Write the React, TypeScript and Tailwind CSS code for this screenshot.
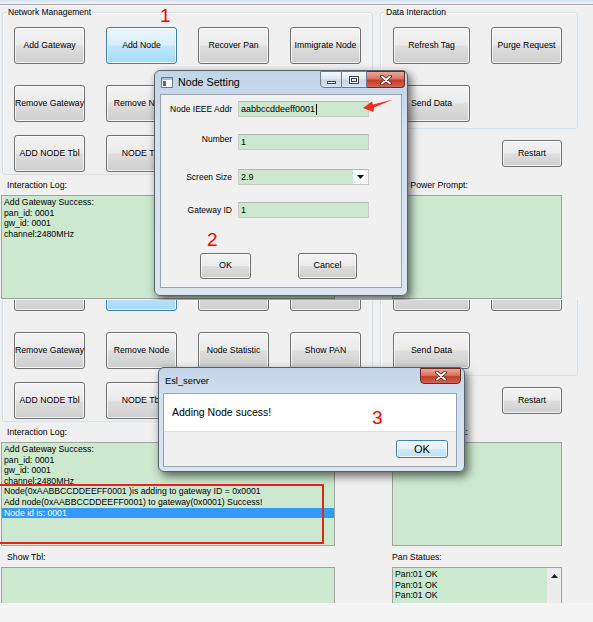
import React from "react";

const FONT = "font-['Liberation_Sans','Arial',sans-serif]";

const BTN_NORMAL =
  "border-[#707070] bg-[linear-gradient(180deg,#f3f3f3_0%,#ebebeb_48%,#dddddd_52%,#cfcfcf_100%)]";
const BTN_ACTIVE =
  "border-[#3c7fb1] bg-[linear-gradient(180deg,#eaf6fd_0%,#d9f0fc_48%,#bee6fd_52%,#a7d9f5_100%)]";
const BTN_DEFAULT =
  "border-[#3c7fb1] bg-[linear-gradient(180deg,#eef7fd_0%,#e2f1fb_48%,#cfe8f7_52%,#c0e0f3_100%)]";

function Btn({
  children,
  size = "h-[37px] w-[71px]",
  kind = "normal",
  text = "text-[8.7px]",
  className = "",
}: {
  children?: React.ReactNode;
  size?: string;
  kind?: "normal" | "active" | "default";
  text?: string;
  className?: string;
}) {
  const skin = kind === "active" ? BTN_ACTIVE : kind === "default" ? BTN_DEFAULT : BTN_NORMAL;
  return (
    <div
      className={`flex flex-none items-center justify-center whitespace-nowrap rounded-[3px] border text-black shadow-[inset_0_0_0_1px_rgba(255,255,255,0.75)] ${skin} ${size} ${text} ${className}`}
    >
      {children}
    </div>
  );
}

function Group({
  title,
  className,
  children,
}: {
  title: string;
  className: string;
  children?: React.ReactNode;
}) {
  return (
    <div className={`rounded-[3px] border border-[#d5dfe5] shadow-[inset_1px_1px_0_#ffffff] ${className}`}>
      <div className="-mt-[7px] ml-[4px] w-fit bg-[#f0f0f0] px-[1px] text-[8.5px] leading-[12px]">{title}</div>
      {children}
    </div>
  );
}

function Label({ className, children }: { className: string; children: React.ReactNode }) {
  return <div className={`text-[8.7px] leading-[12px] ${className}`}>{children}</div>;
}

function GreenBox({ className, children }: { className: string; children?: React.ReactNode }) {
  return <div className={`border border-[#a2a2a2] bg-[#cce8cf] ${className}`}>{children}</div>;
}

function LogLine({ children, selected }: { children: React.ReactNode; selected?: boolean }) {
  return (
    <div
      className={`whitespace-nowrap pl-[2px] text-[8.7px] leading-[10.6px] ${
        selected ? "bg-[#3399ff] text-white" : "text-black"
      }`}
    >
      {children}
    </div>
  );
}

function AppWindow({ log }: { log: React.ReactNode }) {
  return (
    <div className="w-[593px] bg-[#f0f0f0] text-black">
      <div className="h-[4px] bg-[linear-gradient(180deg,#d4e2f1,#eef3f9)]" />
      <div className="h-px bg-[#a7a7a7]" />
      <div className="flex">
        <div className="w-[378px] flex-none">
          <Group title="Network Management" className="ml-[2px] mt-[7px] h-[163px] w-[371px]">
            <div className="mt-[9px] pl-[11px]">
              <div className="flex gap-x-[21px]">
                <Btn>Add Gateway</Btn>
                <Btn kind="active">Add Node</Btn>
                <Btn>Recover Pan</Btn>
                <Btn>Immigrate Node</Btn>
              </div>
              <div className="mt-[21px] flex gap-x-[21px]">
                <Btn>Remove Gateway</Btn>
                <Btn>Remove Node</Btn>
                <Btn>Node Statistic</Btn>
                <Btn>Show PAN</Btn>
              </div>
              <div className="mt-[13px] flex gap-x-[21px]">
                <Btn>ADD NODE Tbl</Btn>
                <Btn>NODE Tbl</Btn>
              </div>
            </div>
          </Group>
          <Label className="ml-[7px] mt-[4px]">Interaction Log:</Label>
          <GreenBox className="ml-[1px] mt-[4px] h-[104px] w-[334px] pt-[1px]">{log}</GreenBox>
          <Label className="ml-[7px] mt-[5px]">Show Tbl:</Label>
          <GreenBox className="ml-[1px] mt-[4px] h-[60px] w-[334px]" />
        </div>
        <div className="flex-1">
          <Group title="Data Interaction" className="ml-[2px] mt-[7px] h-[117px] w-[198px]">
            <div className="mt-[9px] pl-[12px]">
              <div className="flex gap-x-[21px]">
                <Btn size="h-[37px] w-[77px]">Refresh Tag</Btn>
                <Btn>Purge Request</Btn>
              </div>
              <div className="mt-[21px] flex">
                <Btn size="h-[37px] w-[77px]">Send Data</Btn>
              </div>
            </div>
          </Group>
          <Btn size="h-[27px] w-[60px]" className="ml-[124px] mt-[11px]">
            Restart
          </Btn>
          <Label className="ml-[14px] mt-[12px]">Low Power Prompt:</Label>
          <GreenBox className="ml-[14px] mt-[4px] h-[104px] w-[170px]" />
          <Label className="ml-[14px] mt-[5px]">Pan Statues:</Label>
          <GreenBox className="ml-[14px] mt-[4px] flex h-[60px] w-[170px]">
            <div className="flex-1 pt-[1px]">
              <LogLine>Pan:01 OK</LogLine>
              <LogLine>Pan:01 OK</LogLine>
              <LogLine>Pan:01 OK</LogLine>
              <LogLine>Pan:01 OK</LogLine>
            </div>
            <div className="w-[15px] flex-none border-l border-[#dcdcdc] bg-[#ececec]">
              <div className="flex h-[16px] items-center justify-center">
                <svg width="7" height="4" viewBox="0 0 7 4">
                  <polygon points="0,4 3.5,0 7,4" fill="#222" />
                </svg>
              </div>
            </div>
          </GreenBox>
        </div>
      </div>
    </div>
  );
}

function CloseGlyph() {
  return (
    <svg width="12" height="10" viewBox="0 0 12 10">
      <path d="M2 1.5 L10 8.5 M10 1.5 L2 8.5" stroke="#4a1d18" strokeWidth="3.6" strokeLinecap="round" />
      <path d="M2 1.5 L10 8.5 M10 1.5 L2 8.5" stroke="#ffffff" strokeWidth="2" strokeLinecap="round" />
    </svg>
  );
}

const CLOSE_SKIN =
  "border border-[#6b2b24] bg-[linear-gradient(180deg,#e9a99c_0%,#d9735f_45%,#c43c28_55%,#d5644f_100%)]";
const CAP_SKIN =
  "border border-[#6d7b8b] bg-[linear-gradient(180deg,#f4f7fb_0%,#dfe7f0_45%,#c9d6e4_55%,#d8e3ee_100%)]";

function CaptionButtons() {
  return (
    <div className="mr-[2px] flex">
      <div className={`flex h-[17px] w-[22px] items-end justify-center rounded-bl-[4px] pb-[3px] ${CAP_SKIN}`}>
        <svg width="9" height="3" viewBox="0 0 9 3">
          <rect x="0.5" y="0.5" width="8" height="2" fill="#ffffff" stroke="#39475a" />
        </svg>
      </div>
      <div className={`flex h-[17px] w-[25px] items-center justify-center border-l-0 ${CAP_SKIN}`}>
        <svg width="10" height="8" viewBox="0 0 10 8">
          <rect x="0.5" y="0.5" width="9" height="7" fill="#ffffff" stroke="#39475a" />
          <rect x="2.5" y="2.5" width="5" height="3" fill="#dfe7f0" stroke="#39475a" />
        </svg>
      </div>
      <div className={`flex h-[17px] w-[38px] items-center justify-center rounded-br-[4px] border-l-0 ${CLOSE_SKIN}`}>
        <CloseGlyph />
      </div>
    </div>
  );
}

const FRAME =
  "rounded-[6px] border border-[#55626f] bg-[linear-gradient(180deg,#c2d4e8_0%,#d2dfed_25%,#dbe5f0_100%)] shadow-[3px_4px_10px_rgba(0,0,0,0.6)]";

const INPUT =
  "h-[16px] w-[131px] border border-[#c4ccc4] border-t-[#b0b6b0] bg-[#cce8cf] pl-[2px] text-[9px] leading-[14px]";

function FormRow({
  label,
  className,
  labelClass = "",
  children,
}: {
  label: string;
  className: string;
  labelClass?: string;
  children: React.ReactNode;
}) {
  return (
    <div className={`flex items-center ${className}`}>
      <div className={`w-[71px] text-right text-[8.5px] leading-[12px] ${labelClass}`}>{label}</div>
      <div className="ml-[6px]">{children}</div>
    </div>
  );
}

function NodeSetting() {
  return (
    <div className={`absolute left-[154px] top-[70px] flex h-[226px] w-[254px] flex-col ${FRAME}`}>
      <div className="flex h-[23px] flex-none items-start justify-between">
        <div className="flex items-center gap-[5px] pl-[6px] pt-[5px]">
          <svg width="12" height="11" viewBox="0 0 12 11">
            <rect x="0.5" y="0.5" width="11" height="10" fill="#ffffff" stroke="#6f7c8a" />
            <rect x="1" y="1" width="10" height="2" fill="#a9bfd6" />
            <rect x="2" y="4" width="3" height="5" fill="#3f7f68" />
          </svg>
          <span className="text-[10.7px] leading-[12px]">Node Setting</span>
        </div>
        <CaptionButtons />
      </div>
      <div className="mx-[5px] mb-[7px] flex-1 border border-[#94a5b7] bg-[#f0f0f0]">
        <FormRow label="Node IEEE Addr" className="mt-[6px]">
          <div className={`${INPUT} flex items-center`}>
            aabbccddeeff0001
            <span className="ml-[1px] inline-block h-[11px] w-px bg-black" />
          </div>
        </FormRow>
        <FormRow label="Number" className="mt-[16px]" labelClass="mb-[6px]">
          <div className={INPUT}>1</div>
        </FormRow>
        <FormRow label="Screen Size" className="mt-[18px]">
          <div className="flex h-[16px] w-[131px] border border-[#c4ccc4] border-t-[#b0b6b0] bg-white">
            <div className="flex-1 bg-[#cce8cf] pl-[2px] text-[9px] leading-[14px]">2.9</div>
            <div className="flex w-[15px] items-center justify-center">
              <svg width="7" height="4" viewBox="0 0 7 4">
                <polygon points="0,0 7,0 3.5,4" fill="#111" />
              </svg>
            </div>
          </div>
        </FormRow>
        <FormRow label="Gateway ID" className="mt-[17px]">
          <div className={INPUT}>1</div>
        </FormRow>
        <div className="ml-[39px] mt-[35px] flex gap-[47px]">
          <Btn size="h-[26px] w-[51px]" text="text-[9px]">
            OK
          </Btn>
          <Btn size="h-[26px] w-[59px]" text="text-[9px]">
            Cancel
          </Btn>
        </div>
      </div>
    </div>
  );
}

function EslDialog() {
  return (
    <div className={`absolute left-[158px] top-[67px] flex h-[105px] w-[307px] flex-col ${FRAME}`}>
      <div className="flex h-[25px] flex-none items-start justify-between">
        <span className="pl-[6px] pt-[7px] text-[9.3px] leading-[12px]">Esl_server</span>
        <div className={`mr-[3px] flex h-[16px] w-[41px] items-center justify-center rounded-b-[4px] ${CLOSE_SKIN}`}>
          <CloseGlyph />
        </div>
      </div>
      <div className="mb-[4px] ml-[4px] mr-[7px] flex flex-1 flex-col border border-[#94a5b7]">
        <div className="flex h-[37px] flex-none items-center bg-white pl-[8px] text-[10.5px]">Adding Node sucess!</div>
        <div className="flex flex-1 items-start justify-end border-t border-[#dfdfdf] bg-[#f0f0f0] pr-[8px] pt-[8px]">
          <Btn size="h-[18px] w-[52px]" kind="default" text="text-[11px]">
            OK
          </Btn>
        </div>
      </div>
    </div>
  );
}

function Num({ n, className }: { n: string; className: string }) {
  return <div className={`absolute text-[19px] leading-[19px] text-[#ff0000] ${className}`}>{n}</div>;
}

export default function App() {
  const topLog = (
    <>
      <LogLine>Add Gateway Success:</LogLine>
      <LogLine>pan_id: 0001</LogLine>
      <LogLine>gw_id: 0001</LogLine>
      <LogLine>channel:2480MHz</LogLine>
    </>
  );
  const bottomLog = (
    <>
      <LogLine>Add Gateway Success:</LogLine>
      <LogLine>pan_id: 0001</LogLine>
      <LogLine>gw_id: 0001</LogLine>
      <LogLine>channel:2480MHz</LogLine>
      <LogLine>Node(0xAABBCCDDEEFF0001 )is adding to gateway ID = 0x0001</LogLine>
      <LogLine>Add node(0xAABBCCDDEEFF0001) to gateway(0x0001) Success!</LogLine>
      <LogLine selected>Node id is: 0001</LogLine>
    </>
  );

  return (
    <div className={`relative h-[622px] w-[593px] overflow-hidden bg-[#f4f4f4] ${FONT}`}>
      <div className="relative h-[300px] overflow-hidden">
        <AppWindow log={topLog} />
        <NodeSetting />
        <Num n="1" className="left-[160px] top-[6px]" />
        <Num n="2" className="left-[207px] top-[230px]" />
        <svg className="absolute left-[360px] top-[96px]" width="36" height="20" viewBox="0 0 36 20">
          <polygon points="3,12 12,5.5 13,8.5 33,3.5 14,11.5 13.5,16" fill="#f0301e" />
        </svg>
      </div>
      <div className="relative h-[303px] overflow-hidden">
        <div className="-mt-[53px]">
          <AppWindow log={bottomLog} />
        </div>
        <EslDialog />
        <Num n="3" className="left-[372px] top-[108px]" />
        <div className="absolute left-[-4px] top-[184px] h-[60px] w-[328px] border-2 border-[#e8231c]" />
      </div>
    </div>
  );
}
